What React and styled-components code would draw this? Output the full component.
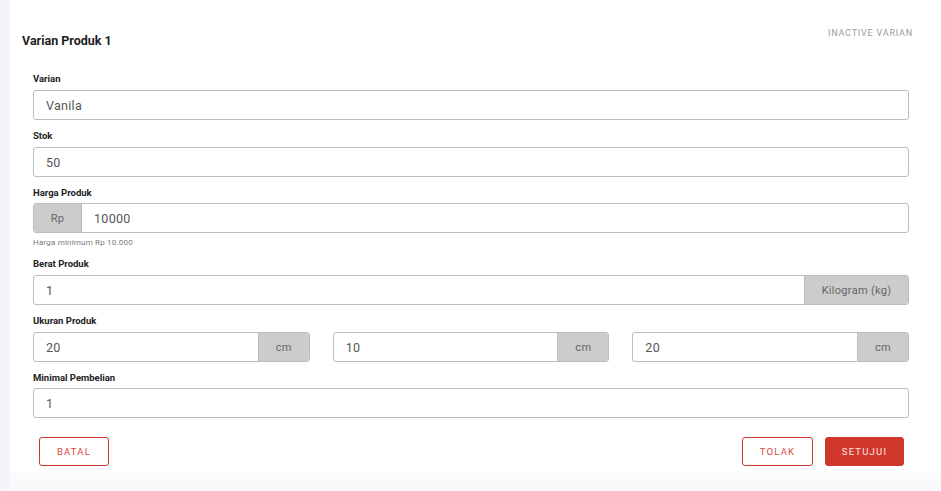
import React from "react";
import styled, { createGlobalStyle } from "styled-components";

const GlobalStyle = createGlobalStyle`
  html, body {
    margin: 0;
    padding: 0;
    background: #fafafa;
  }
  body {
    font-family: Roboto, "Noto Sans", Arial, sans-serif;
  }
  * {
    box-sizing: border-box;
  }
`;

const Page = styled.div`
  display: flex;
  width: 941px;
  height: 491px;
  overflow: hidden;
`;

const SideStrip = styled.div`
  width: 10px;
  flex-shrink: 0;
  background: #f4f5f9;
`;

const Card = styled.div`
  flex: 1;
  height: 473px;
  background: #ffffff;
  padding: 26px 28px 0 12px;
`;

const Header = styled.div`
  display: flex;
  justify-content: space-between;
  align-items: flex-start;
`;

const Title = styled.h3`
  margin: 8px 0 0;
  font-size: 12.5px;
  font-weight: 700;
  color: #1d1d1d;
  line-height: 14px;
`;

const Status = styled.span`
  font-size: 9px;
  letter-spacing: 0.8px;
  color: #9a9a9a;
  line-height: 14px;
`;

const Form = styled.div`
  display: flex;
  flex-direction: column;
  gap: 10px;
  padding: 25px 4px 0 11px;
`;

const Field = styled.div`
  display: flex;
  flex-direction: column;
`;

const Label = styled.label`
  font-size: 9.5px;
  font-weight: 700;
  color: #222;
  line-height: 12px;
  margin-bottom: ${(p) => p.$gap || 5}px;
`;

const InputGroup = styled.div`
  display: flex;
  height: 30px;
  border: 1.5px solid #bcbcbc;
  border-radius: 3px;
  overflow: hidden;
  background: #fff;
`;

const Value = styled.div`
  flex: 1;
  display: flex;
  align-items: center;
  padding-left: 12px;
  font-size: 12.5px;
  color: #555;
  letter-spacing: 0.3px;
`;

const Addon = styled.div`
  width: ${(p) => p.$w}px;
  flex-shrink: 0;
  display: flex;
  align-items: center;
  justify-content: center;
  background: #cccccc;
  font-size: 11px;
  color: #666;
  letter-spacing: 0.3px;
  border-${(p) => (p.$left ? "right" : "left")}: 1.5px solid #bcbcbc;
`;

const Helper = styled.div`
  font-size: 8px;
  color: #7a7a7a;
  margin-top: 5px;
  letter-spacing: 0.2px;
  line-height: 10px;
`;

const Row = styled.div`
  display: flex;
  gap: 23px;

  & > * {
    flex: 1;
  }
`;

const Actions = styled.div`
  display: flex;
  align-items: center;
  padding: 19px 9px 0 17px;
`;

const Spacer = styled.div`
  flex: 1;
`;

const Button = styled.button`
  height: 29px;
  width: ${(p) => p.$w}px;
  margin-left: ${(p) => p.$ml || 0}px;
  border-radius: 3px;
  border: 1.5px solid #d0382b;
  background: ${(p) => (p.$primary ? "#d0382b" : "#fff")};
  color: ${(p) => (p.$primary ? "#fbe5e3" : "#d9473b")};
  font-family: inherit;
  font-size: 9.5px;
  letter-spacing: 1.2px;
  padding: 0;
  cursor: pointer;
`;

const sizes = ["20", "10", "20"];

export default function App() {
  return (
    <>
      <GlobalStyle />
      <Page>
        <SideStrip />
        <Card>
          <Header>
            <Title>Varian Produk 1</Title>
            <Status>INACTIVE VARIAN</Status>
          </Header>
          <Form>
            <Field>
              <Label>Varian</Label>
              <InputGroup>
                <Value>Vanila</Value>
              </InputGroup>
            </Field>
            <Field>
              <Label>Stok</Label>
              <InputGroup>
                <Value>50</Value>
              </InputGroup>
            </Field>
            <Field>
              <Label $gap={4}>Harga Produk</Label>
              <InputGroup>
                <Addon $w={48} $left>Rp</Addon>
                <Value>10000</Value>
              </InputGroup>
              <Helper>Harga minimum Rp 10.000</Helper>
            </Field>
            <Field>
              <Label>Berat Produk</Label>
              <InputGroup>
                <Value>1</Value>
                <Addon $w={104}>Kilogram (kg)</Addon>
              </InputGroup>
            </Field>
            <Field>
              <Label>Ukuran Produk</Label>
              <Row>
                {sizes.map((s, i) => (
                  <InputGroup key={i}>
                    <Value>{s}</Value>
                    <Addon $w={51}>cm</Addon>
                  </InputGroup>
                ))}
              </Row>
            </Field>
            <Field>
              <Label $gap={4}>Minimal Pembelian</Label>
              <InputGroup>
                <Value>1</Value>
              </InputGroup>
            </Field>
          </Form>
          <Actions>
            <Button $w={70}>BATAL</Button>
            <Spacer />
            <Button $w={71}>TOLAK</Button>
            <Button $w={79} $ml={12} $primary>
              SETUJUI
            </Button>
          </Actions>
        </Card>
      </Page>
    </>
  );
}
